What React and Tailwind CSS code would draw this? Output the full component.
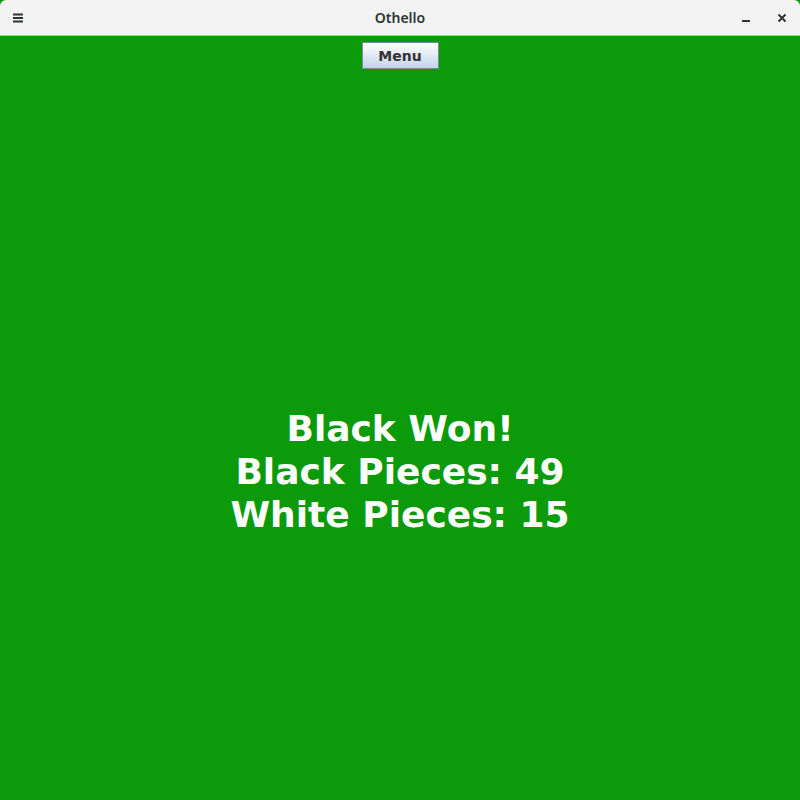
export default function App() {
  return (
    <div className="w-[800px] h-[800px] flex flex-col bg-[#0a9a0a] overflow-hidden" style={{ fontFamily: '"DejaVu Sans", sans-serif' }}>
      <div className="h-[36px] shrink-0 flex items-center bg-[#f3f3f3] border-b border-b-[#bdbdbd] rounded-t-[6px]">
        <div className="w-[72px] flex">
          <div className="w-[36px] flex justify-center">
            <svg width="12" height="10" viewBox="0 0 12 10">
              <rect x="1" y="0.5" width="10" height="2" fill="#2e3436" />
              <rect x="1" y="4" width="10" height="2" fill="#2e3436" />
              <rect x="1" y="7.5" width="10" height="2" fill="#2e3436" />
            </svg>
          </div>
        </div>
        <div className="flex-1 text-center text-[14px] font-semibold text-[#2e3436]" style={{ fontFamily: '"Noto Sans", sans-serif' }}>Othello</div>
        <div className="w-[72px] flex items-center">
          <div className="w-[36px] flex justify-center">
            <svg width="10" height="10" viewBox="0 0 10 10"><rect x="1" y="7" width="8" height="2" fill="#2e3436" /></svg>
          </div>
          <div className="w-[36px] flex justify-center">
            <svg width="10" height="10" viewBox="0 0 10 10"><path d="M1.5 1.5 L8.5 8.5 M8.5 1.5 L1.5 8.5" stroke="#2e3436" strokeWidth="2" /></svg>
          </div>
        </div>
      </div>
      <div className="flex justify-center pt-[6px]">
        <button className="w-[77px] h-[27px] border border-[#7a8a99] bg-gradient-to-b from-[#ffffff] to-[#c3d4e8] text-[14px] font-bold text-[#333] leading-none">Menu</button>
      </div>
      <div className="flex flex-col items-center text-white font-bold text-[36px] leading-[43px] mt-[338px]">
        <div>Black Won!</div>
        <div>Black Pieces: 49</div>
        <div>White Pieces: 15</div>
      </div>
    </div>
  );
}
